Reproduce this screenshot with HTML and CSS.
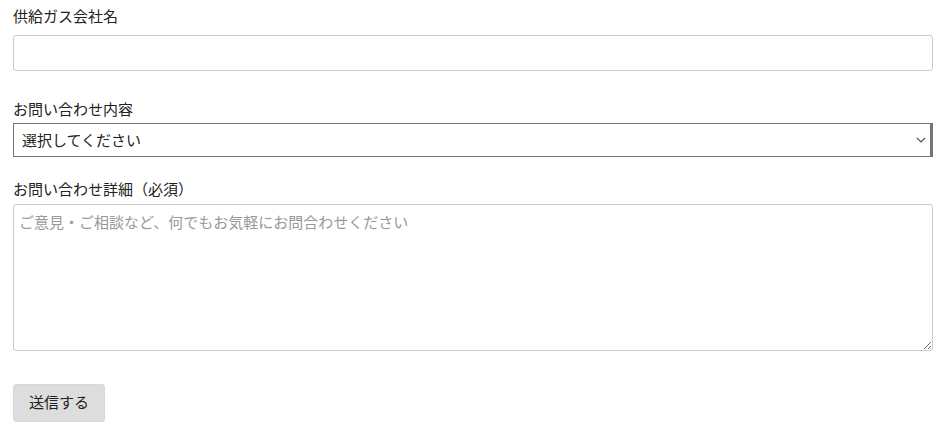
FILE: index.html
```html
<!DOCTYPE html>
<html lang="ja">
<head>
<meta charset="utf-8">
<title>お問い合わせ</title>
<link rel="stylesheet" href="styles.css">
</head>
<body>
<form class="form">
  <label class="label label-first" for="company">供給ガス会社名</label>
  <input class="field input" id="company" type="text">

  <label class="label label-select" for="kind">お問い合わせ内容</label>
  <div class="select-wrap">
    <select class="select" id="kind">
      <option>選択してください</option>
    </select>
    <svg class="chevron" width="10" height="6" viewBox="0 0 10 6" aria-hidden="true"><path d="M1 1l4 4 4-4" fill="none" stroke="#555" stroke-width="1.2"/></svg>
  </div>

  <label class="label label-area" for="detail">お問い合わせ詳細（必須）</label>
  <textarea class="field textarea" id="detail" placeholder="ご意見・ご相談など、何でもお気軽にお問合わせください"></textarea>

  <div class="actions">
    <button class="button" type="button">送信する</button>
  </div>
</form>
</body>
</html>
```
FILE: styles.css
```css
html, body {
  margin: 0;
  padding: 0;
  background: #fff;
}
body {
  font-family: "Noto Sans CJK JP", "Noto Sans", sans-serif;
  color: #222;
}
.form {
  display: flex;
  flex-direction: column;
  padding: 6px 14px 0 13px;
  width: 920px;
}
.label {
  display: block;
  font-size: 15px;
  line-height: 20px;
  height: 20px;
}
.label-first { margin-bottom: 9px; }
.label-select { margin-top: 28px; margin-bottom: 4px; }
.label-area { margin-top: 22px; margin-bottom: 5px; }
.field {
  box-sizing: border-box;
  width: 920px;
  border: 1px solid #ccc;
  border-radius: 3px;
  font-family: inherit;
  font-size: 15px;
  margin: 0;
  background: #fff;
}
.input {
  height: 36px;
  padding: 0 8px;
}
.select-wrap {
  position: relative;
  width: 920px;
  height: 34px;
}
.select {
  appearance: none;
  -webkit-appearance: none;
  box-sizing: border-box;
  width: 920px;
  height: 34px;
  margin: 0;
  border: 1px solid #767676;
  border-right-width: 3px;
  border-radius: 0;
  background: #fff;
  font-family: inherit;
  font-size: 15px;
  color: #222;
  padding: 0 0 0 8px;
  line-height: 32px;
}
.chevron {
  position: absolute;
  right: 7px;
  top: 14px;
  pointer-events: none;
}
.textarea {
  height: 147px;
  padding: 6px 5px;
  line-height: 22px;
  resize: vertical;
  display: block;
}
.textarea::placeholder {
  color: #999;
}
.actions {
  margin-top: 33px;
}
.button {
  box-sizing: border-box;
  height: 38px;
  width: 92px;
  padding: 0 0 3px;
  background: #ddd;
  border: 1px solid #d8d8d8;
  border-radius: 3px;
  font-family: inherit;
  font-size: 15px;
  color: #222;
}
```
